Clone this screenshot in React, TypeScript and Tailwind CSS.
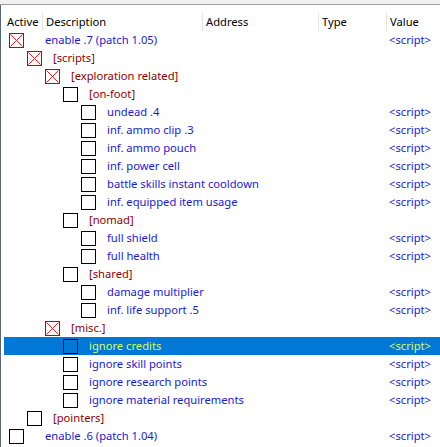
import React from 'react';

type Kind = 'script' | 'group';

interface Entry {
  level: number;
  label: string;
  kind: Kind;
  checked?: boolean;
  selected?: boolean;
  value?: boolean;
}

const entries: Entry[] = [
  { level: 0, label: 'enable .7 (patch 1.05)', kind: 'script', checked: true, value: true },
  { level: 1, label: '[scripts]', kind: 'group', checked: true },
  { level: 2, label: '[exploration related]', kind: 'group', checked: true },
  { level: 3, label: '[on-foot]', kind: 'group' },
  { level: 4, label: 'undead .4', kind: 'script', value: true },
  { level: 4, label: 'inf. ammo clip .3', kind: 'script', value: true },
  { level: 4, label: 'inf. ammo pouch', kind: 'script', value: true },
  { level: 4, label: 'inf. power cell', kind: 'script', value: true },
  { level: 4, label: 'battle skills instant cooldown', kind: 'script', value: true },
  { level: 4, label: 'inf. equipped item usage', kind: 'script', value: true },
  { level: 3, label: '[nomad]', kind: 'group' },
  { level: 4, label: 'full shield', kind: 'script', value: true },
  { level: 4, label: 'full health', kind: 'script', value: true },
  { level: 3, label: '[shared]', kind: 'group' },
  { level: 4, label: 'damage multiplier', kind: 'script', value: true },
  { level: 4, label: 'inf. life support .5', kind: 'script', value: true },
  { level: 2, label: '[misc.]', kind: 'group', checked: true },
  { level: 3, label: 'ignore credits', kind: 'script', value: true, selected: true },
  { level: 3, label: 'ignore skill points', kind: 'script', value: true },
  { level: 3, label: 'ignore research points', kind: 'script', value: true },
  { level: 3, label: 'ignore material requirements', kind: 'script', value: true },
  { level: 1, label: '[pointers]', kind: 'group' },
  { level: 0, label: 'enable .6 (patch 1.04)', kind: 'script', value: true },
];

const indent = ['pl-[5px]', 'pl-[23px]', 'pl-[41px]', 'pl-[59px]', 'pl-[77px]'];

const CheckBox: React.FC<{ checked?: boolean }> = ({ checked }) => (
  <div
    className={`w-[15px] h-[15px] shrink-0 border ${
      checked ? 'border-[#8b1a1a]' : 'border-black'
    }`}
  >
    {checked && (
      <svg width="13" height="13" viewBox="0 0 13 13" className="block">
        <line x1="0.5" y1="0.5" x2="12.5" y2="12.5" stroke="#e02424" strokeWidth="1" />
        <line x1="12.5" y1="0.5" x2="0.5" y2="12.5" stroke="#e02424" strokeWidth="1" />
      </svg>
    )}
  </div>
);

const Row: React.FC<{ e: Entry }> = ({ e }) => {
  const textColor = e.selected
    ? 'text-[#d4ff5c]'
    : e.kind === 'group'
    ? 'text-[#8b0000]'
    : 'text-[#1a1ac8]';
  return (
    <div className={`h-[18px] flex items-center ${e.selected ? 'bg-[#0078d7]' : ''}`}>
      <div className={`flex-1 flex items-center ${indent[e.level]}`}>
        <CheckBox checked={e.checked} />
        <span className={`${e.level === 0 ? 'ml-[21px]' : 'ml-[11px]'} whitespace-nowrap ${textColor}`}>
          {e.label}
        </span>
      </div>
      <div className={`w-[53px] shrink-0 pl-[2px] whitespace-nowrap ${e.selected ? 'text-[#d4ff5c]' : 'text-[#1a1ac8]'}`}>
        {e.value ? '<script>' : ''}
      </div>
    </div>
  );
};

export default function App() {
  return (
    <div
      className="w-[440px] h-[447px] overflow-hidden bg-white text-[11.2px] leading-none text-black"
      style={{ fontFamily: '"Noto Sans", "Open Sans", sans-serif' }}
    >
      <div className="h-[5px] bg-[#f0f0f0] border-b border-[#a0a0a0]" />
      <div className="border-l border-[#5a6478] h-[442px]">
        {/* Header */}
        <div className="h-[26px] flex items-start">
          <div className="w-[42px] h-[18px] mt-[8px] border-r border-[#e3e3e3] flex items-center pl-[6px]">Active</div>
          <div className="w-[160px] h-[18px] mt-[8px] border-r border-[#e3e3e3] flex items-center pl-[3px]">Description</div>
          <div className="w-[116px] h-[18px] mt-[8px] border-r border-[#e3e3e3] flex items-center pl-[3px]">Address</div>
          <div className="w-[68px] h-[18px] mt-[8px] border-r border-[#e3e3e3] flex items-center pl-[3px]">Type</div>
          <div className="flex-1 h-[18px] mt-[8px] flex items-center pl-[3px]">Value</div>
        </div>
        <div className="pl-[3px]">
          {entries.map((e, i) => (
            <Row key={i} e={e} />
          ))}
        </div>
      </div>
    </div>
  );
}
